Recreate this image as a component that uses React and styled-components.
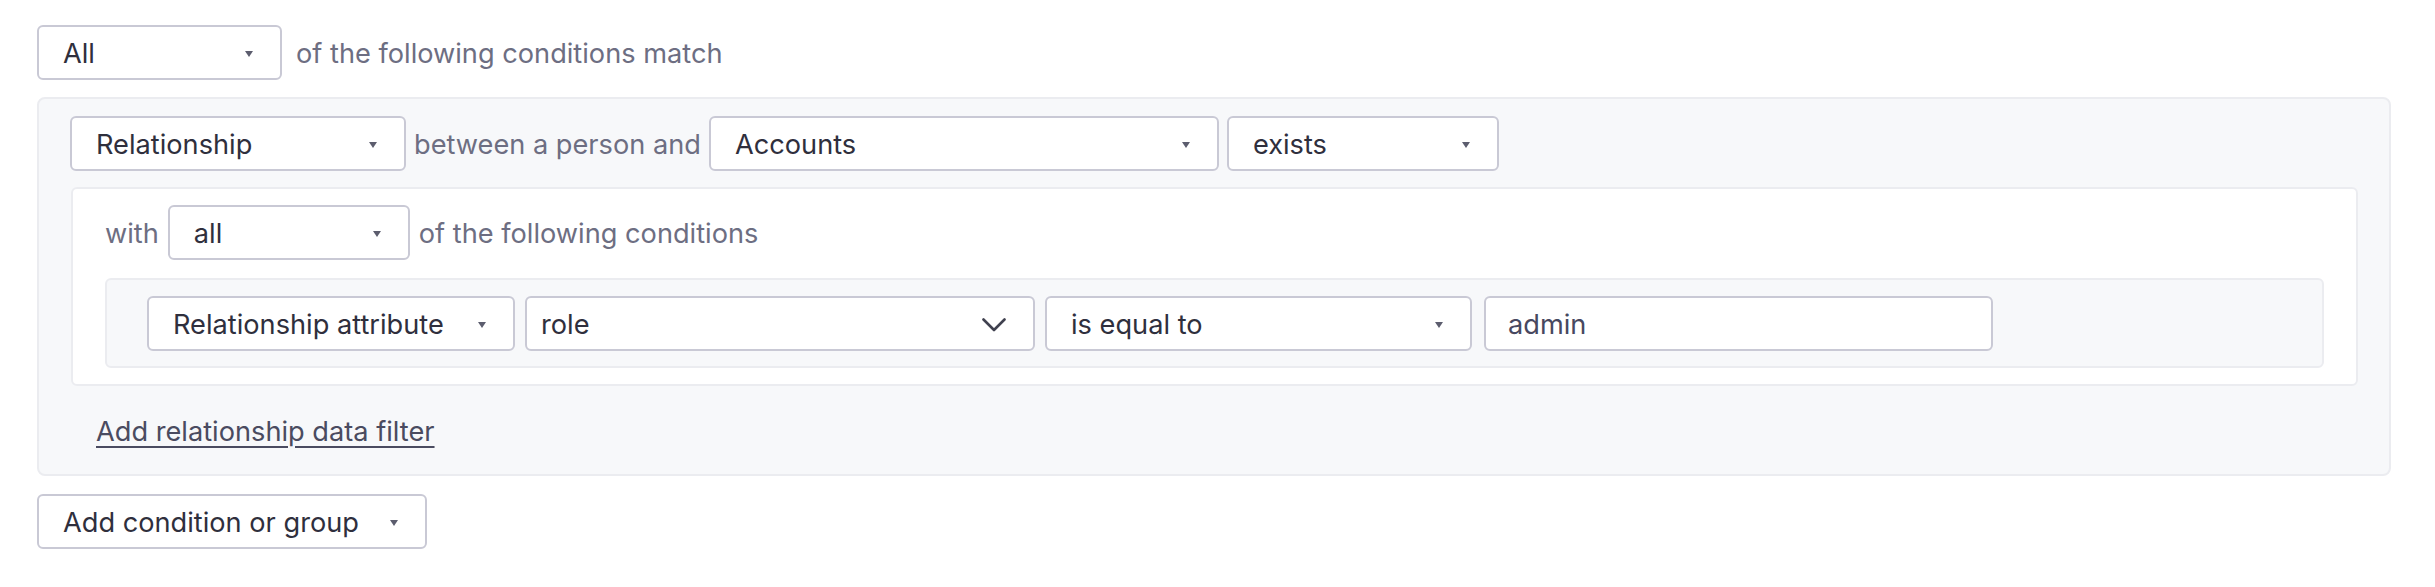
import React from "react";
import styled, { createGlobalStyle } from "styled-components";

const GlobalStyle = createGlobalStyle`
  * { box-sizing: border-box; }
  html, body { margin: 0; padding: 0; background: #ffffff; }
  body {
    font-family: Inter, "Noto Sans", "Liberation Sans", sans-serif;
    font-size: 27.2px;
    color: #2f2f3d;
  }
`;

const Page = styled.div`
  padding: 25px 44px 0 37px;
`;

const Row = styled.div`
  display: flex;
  align-items: center;
  gap: ${(p) => p.$gap || 9}px;
`;

const Label = styled.span`
  color: #6d6e82;
  white-space: nowrap;
  line-height: 1;
  padding-top: 3px;
`;

const SelectBox = styled.div`
  display: flex;
  align-items: center;
  justify-content: space-between;
  width: ${(p) => p.$w}px;
  height: 55px;
  padding: 2px ${(p) => (p.$chevron ? 27 : 24)}px 0 ${(p) => p.$pl ?? 24}px;
  background: #ffffff;
  border: 2px solid #c9c9d5;
  border-radius: 6px;
  color: #2f2f3d;
  white-space: nowrap;
  flex: none;
`;

const Caret = styled.span`
  width: 0;
  height: 0;
  margin-top: 1px;
  margin-right: 3px;
  border-left: 4.5px solid transparent;
  border-right: 4.5px solid transparent;
  border-top: 6px solid #5c5d6e;
  flex: none;
`;

const TextInput = styled.div`
  display: flex;
  align-items: center;
  width: ${(p) => p.$w}px;
  height: 55px;
  padding: 2px 22px 0;
  margin-left: ${(p) => p.$ml || 0}px;
  background: #ffffff;
  border: 2px solid #c9c9d5;
  border-radius: 6px;
  color: #474860;
  flex: none;
`;

const Group = styled.div`
  margin-top: 17px;
  background: #f7f8fa;
  border: 2px solid #ebecf0;
  border-radius: 8px;
  padding: 17px 31px 24px 31px;
`;

const Inner = styled.div`
  margin-top: 16px;
  margin-left: 1px;
  background: #ffffff;
  border: 2px solid #ebecf0;
  border-radius: 6px;
  padding: 16px 32px 16px 32px;
`;

const ConditionRow = styled.div`
  margin-top: 18px;
  display: flex;
  align-items: center;
  gap: 10px;
  background: #f7f8fa;
  border: 2px solid #ebecf0;
  border-radius: 6px;
  padding: 16px 40px 15px;
`;

const LinkText = styled.a`
  display: inline-block;
  margin-top: 27px;
  margin-left: 26px;
  color: #4a4b60;
  text-decoration: underline;
  text-decoration-thickness: 2px;
  text-underline-offset: 5px;
  line-height: 37px;
  cursor: pointer;
`;

const Footer = styled.div`
  margin-top: 18px;
`;

const Chevron = () => (
  <svg width="24" height="14" viewBox="0 0 24 14" fill="none">
    <polyline
      points="1.5,1.5 12,12 22.5,1.5"
      stroke="#40414f"
      strokeWidth="2.6"
      strokeLinecap="round"
      strokeLinejoin="round"
    />
  </svg>
);

const Select = ({ w, children, pl }) => (
  <SelectBox $w={w} $pl={pl}>
    <span>{children}</span>
    <Caret />
  </SelectBox>
);

export default function App() {
  return (
    <>
      <GlobalStyle />
      <Page>
        <Row $gap={14}>
          <Select w={245}>All</Select>
          <Label>of the following conditions match</Label>
        </Row>

        <Group>
          <Row $gap={8}>
            <Select w={336}>Relationship</Select>
            <Label>between a person and</Label>
            <Select w={510}>Accounts</Select>
            <Select w={272}>exists</Select>
          </Row>

          <Inner>
            <Row $gap={9}>
              <Label>with</Label>
              <Select w={242}>all</Select>
              <Label>of the following conditions</Label>
            </Row>

            <ConditionRow>
              <Select w={368}>Relationship attribute</Select>
              <SelectBox $w={510} $pl={14} $chevron>
                <span>role</span>
                <Chevron />
              </SelectBox>
              <Select w={427}>is equal to</Select>
              <TextInput $w={509} $ml={2}>admin</TextInput>
            </ConditionRow>
          </Inner>

          <LinkText>Add relationship data filter</LinkText>
        </Group>

        <Footer>
          <Select w={390}>Add condition or group</Select>
        </Footer>
      </Page>
    </>
  );
}
